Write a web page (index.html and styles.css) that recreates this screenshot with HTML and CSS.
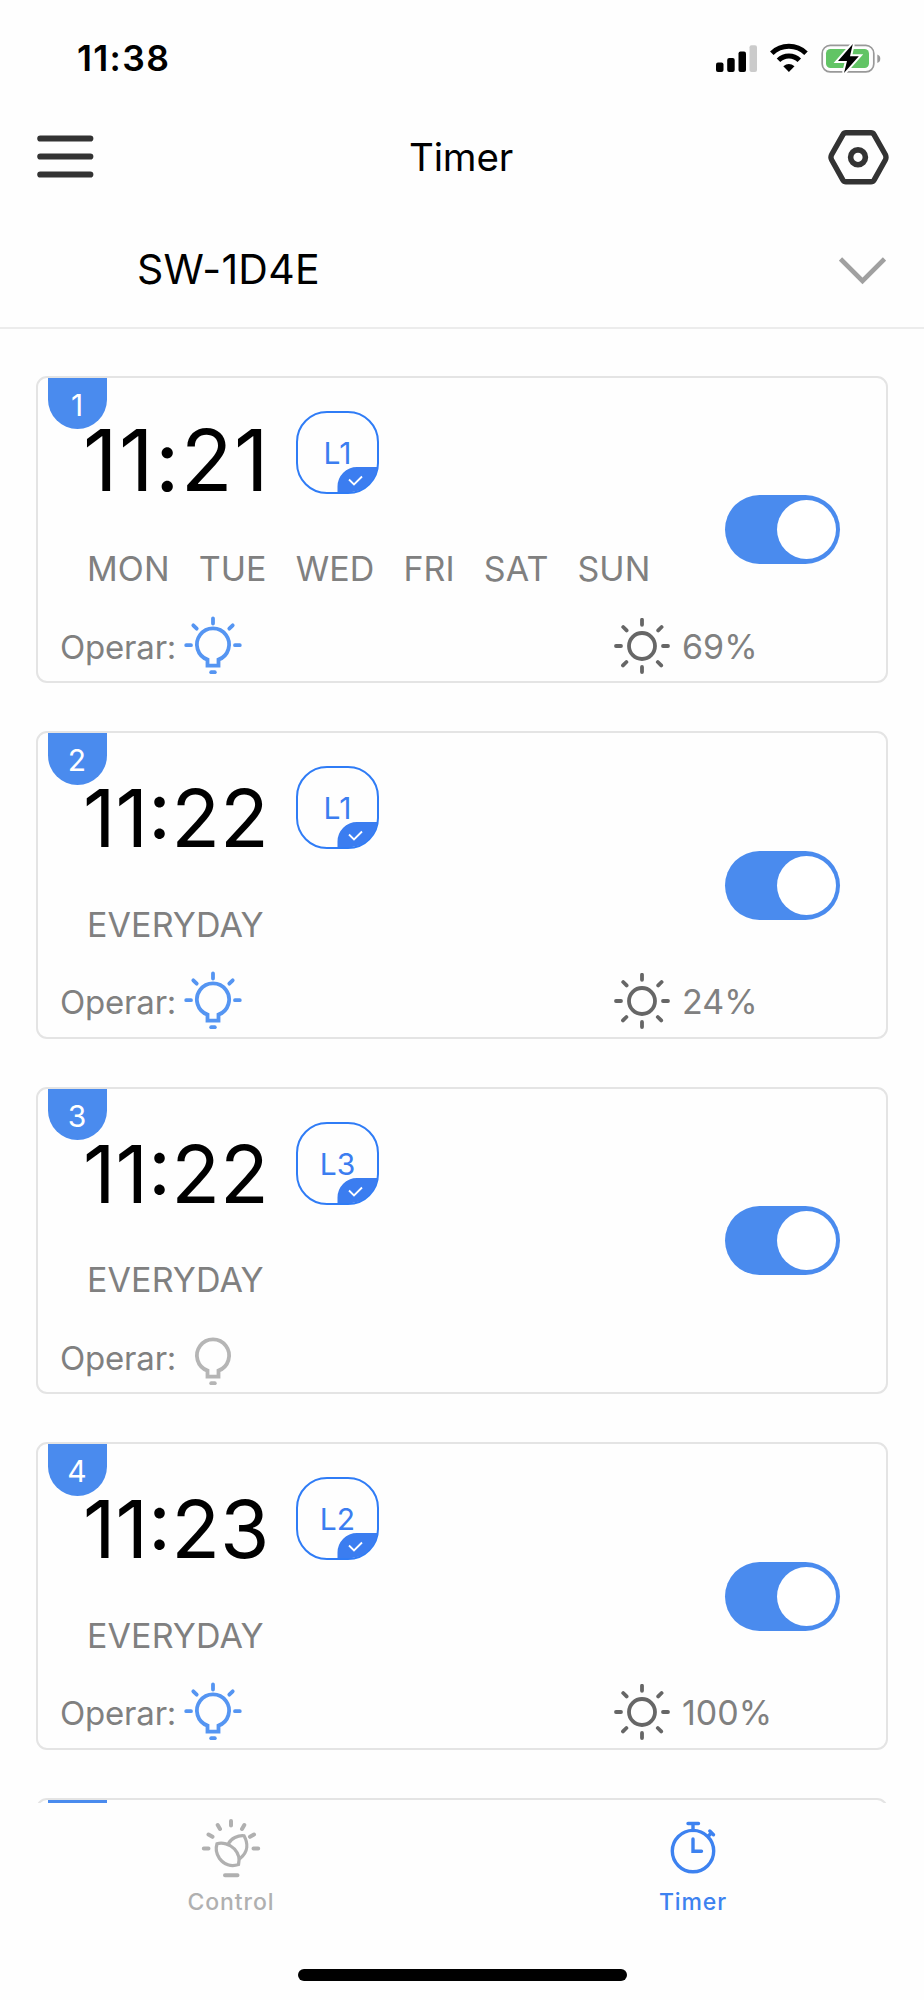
FILE: index.html
```html
<!DOCTYPE html>
<html lang="en">
<head>
  <meta charset="UTF-8" />
  <title>Timer</title>
  <meta name="viewport" content="width=device-width, initial-scale=1.0"/>
  <link rel="stylesheet" href="styles.css">
</head>
<body>

  <!-- Shared icons -->
  <svg class="sprite" xmlns="http://www.w3.org/2000/svg">
    <symbol id="bulb" viewBox="0 0 58 58">
      <path d="M23.5 43.6A16.1 16.1 0 1 1 34.5 43.6V49.7H23.5Z" fill="none" stroke="currentColor" stroke-width="3.8"/>
      <path d="M27.2 56.2H30.8" stroke="currentColor" stroke-width="3.8" stroke-linecap="round"/>
    </symbol>
    <symbol id="rays" viewBox="0 0 58 58">
      <path d="M29 2.5V7.5M9.3 9.3L12.7 12.7M48.7 9.3L45.3 12.7M2.2 29.2H7M51 29.2H55.8" stroke="currentColor" stroke-width="3.8" stroke-linecap="round"/>
    </symbol>
    <symbol id="sun" viewBox="0 0 56 56">
      <circle cx="28" cy="28" r="13" fill="none" stroke="currentColor" stroke-width="3.8"/>
      <path d="M28 1.8V6.8M28 49V54M2 28H7M49 28H54M9.2 9L12.6 12.4M47.6 9L44.2 12.4M9 47.4L12.4 44M47.2 47.4L43.8 44" stroke="currentColor" stroke-width="3.8" stroke-linecap="round"/>
    </symbol>
    <symbol id="corner" viewBox="0 0 41 27">
      <path d="M0.5 26V20.5A19.5 19.5 0 0 1 20 1H40.5C39.5 13 29 24.5 15 26Z" fill="#3b7df0"/>
      <path d="M12 13.5L17 18.5L25 10.5" fill="none" stroke="#fff" stroke-width="1.8"/>
    </symbol>
  </svg>

  <!-- Status bar -->
  <div class="status-bar">
    <span class="clock">11:38</span>
    <svg class="status-icons" viewBox="0 0 166 32">
      <rect x="0" y="20.5" width="7.5" height="9.5" rx="2"/>
      <rect x="11.2" y="16" width="7.5" height="14" rx="2"/>
      <rect x="22.5" y="9.5" width="7.5" height="20.5" rx="2"/>
      <rect x="33.5" y="3.3" width="7.5" height="26.7" rx="2" fill="#cbcbcb"/>
      <path d="M55.8 11.3A24.5 24.5 0 0 1 90 11.3" fill="none" stroke="#000" stroke-width="5"/>
      <path d="M62.5 18.2A14.8 14.8 0 0 1 83.3 18.2" fill="none" stroke="#000" stroke-width="5"/>
      <path d="M67.3 24.3Q72.9 19.5 78.5 24.3L72.9 30Z"/>
      <rect x="106.2" y="3.4" width="51.6" height="26.5" rx="8" fill="none" stroke="#999" stroke-width="1.7"/>
      <path d="M161.3 12.5Q164.3 13.5 164.3 16.8T161.3 21Z" fill="#999"/>
      <rect x="110" y="7" width="43" height="19" rx="4.5" fill="#62c465"/>
      <path d="M136.8 2L122 19H131L128 31L142.8 14.2H134Z" stroke="#fff" stroke-width="4"/>
      <path d="M136.8 2L122 19H131L128 31L142.8 14.2H134Z"/>
    </svg>
  </div>

  <!-- Header -->
  <header class="header">
    <svg class="menu-icon" viewBox="0 0 57 43">
      <path d="M3.3 3.5H53.3M3.3 21.5H53.3M3.3 39.5H53.3" stroke="#333" stroke-width="6.2" stroke-linecap="round"/>
    </svg>
    <h1>Timer</h1>
    <svg class="settings-icon" viewBox="0 0 61 55">
      <path d="M18 2.8H43Q45 2.8 46.2 4.8L57.3 24.5Q58.7 27.3 57.3 30L46.2 49.8Q45 51.8 43 51.8H18Q16 51.8 14.8 49.8L3.7 30Q2.2 27.3 3.7 24.5L14.8 4.8Q16 2.8 18 2.8Z" fill="none" stroke="#333" stroke-width="5.4"/>
      <circle cx="30" cy="27.3" r="7.4" fill="none" stroke="#333" stroke-width="5.6"/>
    </svg>
  </header>

  <div class="device">
    <span class="device-name">SW-1D4E</span>
    <svg class="chevron" viewBox="0 0 47 28">
      <path d="M1.5 2L23.5 24L45.5 2" fill="none" stroke="#a0a0a0" stroke-width="4.6"/>
    </svg>
  </div>

  <!-- Timer list -->
  <div class="timers">
    <div class="card">
      <div class="number"><span>1</span></div>
      <div class="card-main">
        <div class="info">
          <div class="time-row">
            <span class="time time-large">11:21</span>
            <div class="lamp">L1<svg class="corner"><use href="#corner"/></svg></div>
          </div>
          <div class="days"><span>MON</span><span>TUE</span><span>WED</span><span>FRI</span><span>SAT</span><span>SUN</span></div>
        </div>
        <div class="toggle"></div>
      </div>
      <div class="card-foot">
        <span class="operar">Operar:</span>
        <svg class="bulb"><use href="#bulb"/><use href="#rays"/></svg>
        <svg class="sun"><use href="#sun"/></svg>
        <span class="percent">69%</span>
      </div>
    </div>

    <div class="card">
      <div class="number"><span>2</span></div>
      <div class="card-main">
        <div class="info">
          <div class="time-row">
            <span class="time">11:22</span>
            <div class="lamp">L1<svg class="corner"><use href="#corner"/></svg></div>
          </div>
          <div class="days"><span>EVERYDAY</span></div>
        </div>
        <div class="toggle"></div>
      </div>
      <div class="card-foot">
        <span class="operar">Operar:</span>
        <svg class="bulb"><use href="#bulb"/><use href="#rays"/></svg>
        <svg class="sun"><use href="#sun"/></svg>
        <span class="percent">24%</span>
      </div>
    </div>

    <div class="card">
      <div class="number"><span>3</span></div>
      <div class="card-main">
        <div class="info">
          <div class="time-row">
            <span class="time">11:22</span>
            <div class="lamp">L3<svg class="corner"><use href="#corner"/></svg></div>
          </div>
          <div class="days"><span>EVERYDAY</span></div>
        </div>
        <div class="toggle"></div>
      </div>
      <div class="card-foot">
        <span class="operar">Operar:</span>
        <svg class="bulb off"><use href="#bulb"/></svg>
      </div>
    </div>

    <div class="card">
      <div class="number"><span>4</span></div>
      <div class="card-main">
        <div class="info">
          <div class="time-row">
            <span class="time">11:23</span>
            <div class="lamp">L2<svg class="corner"><use href="#corner"/></svg></div>
          </div>
          <div class="days"><span>EVERYDAY</span></div>
        </div>
        <div class="toggle"></div>
      </div>
      <div class="card-foot">
        <span class="operar">Operar:</span>
        <svg class="bulb"><use href="#bulb"/><use href="#rays"/></svg>
        <svg class="sun"><use href="#sun"/></svg>
        <span class="percent">100%</span>
      </div>
    </div>

    <div class="card">
      <div class="number"></div>
    </div>
  </div>

  <!-- Bottom tabs -->
  <nav class="tabs">
    <div class="tab">
      <svg class="tab-icon" viewBox="0 0 60 60">
        <g fill="none" stroke="currentColor" stroke-width="4" stroke-linecap="round">
          <path d="M30 3V7.5M16.7 7L19 11M43.3 7L41 11M7.5 16.5L11.5 18.8M53 16.5L49 18.8M2.8 30.5H7.5M52.5 30.5H57.2M24 57.3H36.5"/>
          <path stroke-width="3.3" d="M16 25.8C21 24 29 26 33.5 31C37.5 35.5 39 41 37.5 46.500C30 49 23 46.5 18.5 40.5C15 35.5 14.5 30.5 16 25.8Z"/>
          <path stroke-width="3.3" d="M27.5 25.5C30 20.5 37 17.2 43 17.8C47 25 47.5 34 39 40.5"/>
        </g>
      </svg>
      <span>Control</span>
    </div>
    <div class="tab active">
      <svg class="tab-icon" viewBox="0 0 60 60">
        <g fill="none" stroke="currentColor" stroke-width="3.4" stroke-linecap="round">
          <circle cx="30" cy="33.1" r="20.7"/>
          <path d="M25 5.5H35.5M30 5.5V12.5M45.5 18L48.3 15M46.8 13L50.500 16.7M30 21V33.2H38.5"/>
        </g>
      </svg>
      <span>Timer</span>
    </div>
  </nav>
  <div class="home-bar"></div>

</body>
</html>
```
FILE: styles.css
```css
* { box-sizing: border-box; }
body {
  margin: 0;
  height: 2000px;
  display: flex;
  flex-direction: column;
  overflow: hidden;
  background: #fefefe;
  color: #000;
  font-family: Inter, sans-serif;
}
svg { display: block; flex: none; }
.sprite { display: none; }

/* Status bar */
.status-bar {
  height: 118px;
  flex: none;
  display: flex;
  justify-content: space-between;
  padding: 39px 42px 0 77px;
}
.clock {
  font-size: 35.5px;
  font-weight: 600;
  line-height: 40px;
  letter-spacing: 1.3px;
}
.status-icons {
  width: 166px;
  height: 32px;
  margin-top: 3px;
}

/* Header */
.header {
  height: 78px;
  flex: none;
  display: flex;
  justify-content: space-between;
  align-items: center;
  padding: 0 35px 0 37px;
}
.header h1 {
  margin: 0;
  font-size: 38.5px;
  font-weight: 400;
  line-height: 78px;
  letter-spacing: -0.2px;
}
.menu-icon { width: 57px; height: 43px; margin-top: -1px; }
.settings-icon { width: 61px; height: 55px; }

.device {
  height: 133px;
  flex: none;
  display: flex;
  justify-content: space-between;
  padding: 53px 38px 0 137px;
  border-bottom: 2px solid #ececec;
}
.device-name {
  font-size: 41px;
  line-height: 40px;
  letter-spacing: 0.3px;
}
.chevron {
  width: 47px;
  height: 28px;
  margin-top: 8px;
}

/* Timer list */
.timers {
  height: 1474px;
  flex: none;
  overflow: hidden;
  padding: 46.5px 36px 0;
}
.card {
  position: relative;
  height: 307.5px;
  margin-bottom: 48px;
  border: 2px solid #e4e4e4;
  border-radius: 11px;
}
.number {
  position: absolute;
  top: 0;
  left: 9.5px;
  width: 59px;
  height: 51.5px;
  border-radius: 0 0 30px 30px;
  background: #4a8bee;
  color: #fff;
  font-size: 30px;
  line-height: 55px;
  text-align: center;
}
.card-main {
  height: 238px;
  display: flex;
  justify-content: space-between;
  padding: 33px 46px 0 45px;
}
.time-row {
  display: flex;
  height: 83px;
}
.time {
  width: 213px;
  margin-top: 12px;
  font-size: 80px;
  line-height: 80px;
}
.time-large {
  margin-top: 10px;
  font-size: 85px;
  letter-spacing: 1.4px;
}
.lamp {
  position: relative;
  width: 83px;
  height: 83px;
  border: 2px solid #2f7cf6;
  border-radius: 31px;
  color: #3b7df0;
  font-size: 30px;
  line-height: 81px;
  text-align: center;
}
.corner {
  position: absolute;
  right: -1px;
  bottom: -1px;
  width: 41px;
  height: 27px;
}
.days {
  display: flex;
  gap: 29px;
  margin: 55.5px 0 0 4px;
  color: #808080;
  font-size: 34px;
  line-height: 40px;
  letter-spacing: 0.1px;
}
.toggle {
  width: 115px;
  height: 69px;
  margin-top: 84.5px;
  padding: 5px 4px;
  border-radius: 35px;
  background: #4a8bee;
  display: flex;
  justify-content: flex-end;
}
.toggle::after {
  content: "";
  width: 59px;
  height: 59px;
  border-radius: 50%;
  background: #fff;
}
.card-foot {
  display: flex;
  height: 62px;
  padding-left: 22px;
  color: #808080;
  font-size: 34px;
  line-height: 62px;
}
.operar { width: 124px; font-size: 33px; letter-spacing: -0.2px; }
.bulb {
  width: 58px;
  height: 58px;
  color: #5595f2;
}
.bulb.off { color: #b5b5b5; }
.sun {
  width: 56px;
  height: 56px;
  margin: 2px 12px 0 372px;
  color: #666;
}

/* Bottom tabs */
.tabs {
  height: 166px;
  flex: none;
  display: flex;
}
.tab {
  flex: 1;
  display: flex;
  flex-direction: column;
  align-items: center;
  padding-top: 15px;
  color: #b0b0b0;
  font-size: 23px;
  font-weight: 500;
  letter-spacing: 0.9px;
  line-height: 30px;
}
.tab-icon {
  width: 60px;
  height: 60px;
  margin-bottom: 9px;
}
.tab.active { color: #3d82f0; }
.home-bar {
  width: 329px;
  height: 12px;
  flex: none;
  margin: 0 auto;
  border-radius: 6px;
  background: #000;
}
```
